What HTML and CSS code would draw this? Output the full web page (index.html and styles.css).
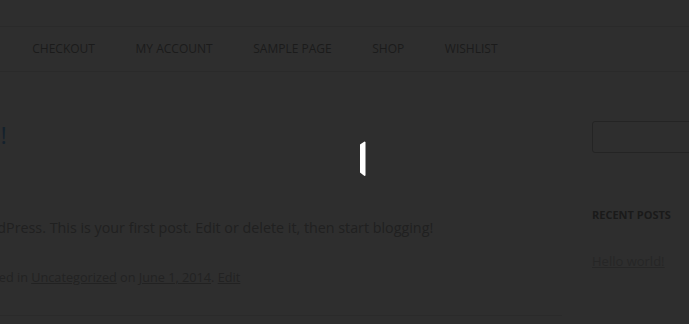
FILE: index.html
```html
<!DOCTYPE html>
<html lang="en">
<head>
    <meta charset="UTF-8">
    <meta name="viewport" content="width=device-width, initial-scale=1.0">
    <title>Hello world!</title>
    <link rel="stylesheet" href="styles.css">
</head>
<body>

    <div class="site">
        <header class="site-header"></header>

        <!-- Menu utama -->
        <nav class="main-nav">
            <ul>
                <li><a href="#">Checkout</a></li>
                <li><a href="#">My Account</a></li>
                <li><a href="#">Sample Page</a></li>
                <li><a href="#">Shop</a></li>
                <li><a href="#">Wishlist</a></li>
            </ul>
        </nav>

        <div class="main">
            <article class="post">
                <h1 class="post-title"><a href="#">Hello world!</a></h1>
                <p class="post-content">Welcome to WordPress. This is your first post. Edit or delete it, then start blogging!</p>
                <p class="post-meta">This entry was posted in <a href="#">Uncategorized</a> on <a href="#">June 1, 2014</a>. <a href="#">Edit</a></p>
            </article>

            <aside class="sidebar">
                <input type="search" class="search-field">
                <h3 class="widget-title">Recent Posts</h3>
                <a href="#" class="widget-link">Hello world!</a>
            </aside>
        </div>
    </div>

    <!-- Loading overlay -->
    <div class="loader">
        <svg class="spinner" width="8" height="36" viewBox="0 0 8 36">
            <path d="M1 3.5 L5.5 0.5 L6.5 1 L6.5 34.5 L5.5 35 L1 31.5 Z" fill="#fff"/>
        </svg>
    </div>

</body>
</html>
```

FILE: styles.css
```css
body {
    font-family: "Open Sans", Arial, sans-serif;
    background-color: #2e2e2e;
    color: #202020;
    margin: 0;
    overflow: hidden;
}

a {
    color: inherit;
}

.site {
    width: 689px;
}

.site-header {
    height: 26px;
}

.main-nav {
    height: 44px;
    border-top: 1px solid #2a2a2a;
    border-bottom: 1px solid #2a2a2a;
}

.main-nav ul {
    list-style: none;
    margin: 0;
    padding: 0 0 0 12px;
    display: flex;
}

.main-nav a {
    display: block;
    padding: 0 20.3px;
    line-height: 43px;
    font-size: 12px;
    text-transform: uppercase;
    text-decoration: none;
    color: #1b1b1b;
}

.main {
    display: flex;
    margin-left: -112px;
}

.post {
    width: 674px;
    flex-shrink: 0;
    padding-top: 48px;
    border-bottom: 1px solid #2a2a2a;
    height: 195px;
}

.post-title {
    margin: 0 0 0 -15px;
    font-size: 24px;
    font-weight: normal;
    line-height: 30px;
}

.post-title a {
    color: #14212c;
    text-decoration: none;
}

.post-content {
    margin: 66px 0 0 -1px;
    font-size: 14.3px;
    line-height: 24px;
    color: #202020;
}

.post-meta {
    margin: 25px 0 0 -3px;
    font-size: 12.7px;
    line-height: 24px;
    color: #222;
}

.sidebar {
    margin-left: 30px;
    padding-top: 49px;
    flex-shrink: 0;
    width: 200px;
}

.search-field {
    display: block;
    box-sizing: border-box;
    width: 200px;
    height: 32px;
    margin: 0;
    background: transparent;
    border: 1px solid #242424;
    border-radius: 3px;
}

.widget-title {
    margin: 54px 0 0;
    font-size: 11px;
    font-weight: bold;
    text-transform: uppercase;
    color: #1a1a1a;
    line-height: 16px;
}

.widget-link {
    display: inline-block;
    margin-top: 29px;
    font-size: 13px;
    color: #262626;
}

.loader {
    position: fixed;
    inset: 0;
}

.spinner {
    position: absolute;
    left: 359px;
    top: 141px;
}
```
